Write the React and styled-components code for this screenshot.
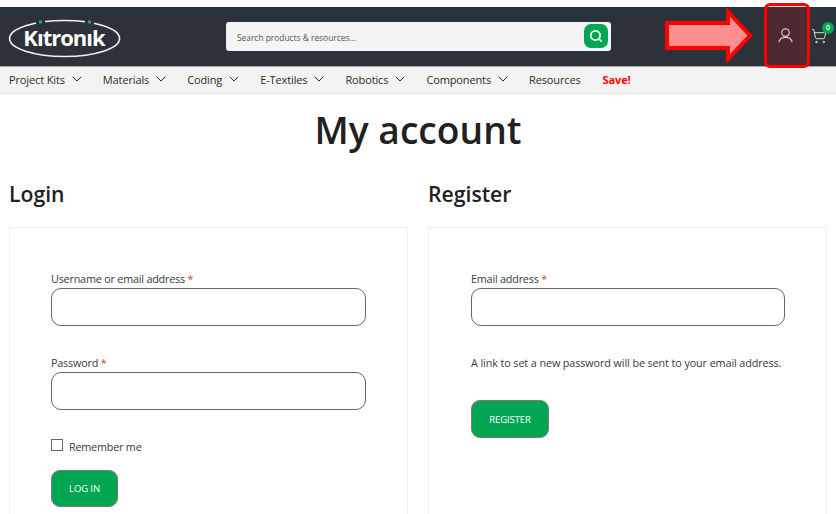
import React from "react";
import styled, { createGlobalStyle } from "styled-components";
import { ChevronDown, Search, ShoppingCart } from "lucide-react";

const GlobalStyle = createGlobalStyle`
  html, body {
    margin: 0;
    padding: 0;
    background: #fff;
    height: 514px;
    overflow: hidden;
    font-family: "Open Sans", "Liberation Sans", sans-serif;
    color: #212529;
  }
  * { box-sizing: border-box; }
`;

const Page = styled.div`
  position: relative;
  width: 836px;
  height: 514px;
  overflow: hidden;
  padding-top: 7px;
`;

const Header = styled.header`
  height: 60px;
  background: #2d3139;
  border-bottom: 1px solid #a9a9ab;
  display: flex;
  align-items: center;
  padding-left: 8px;
`;

const Logo = styled.div`
  position: relative;
  width: 114px;
  height: 42px;
  display: flex;
  align-items: center;
  justify-content: center;
  margin-top: 1px;
  flex: none;
`;

const LogoRing = styled.svg`
  position: absolute;
  inset: 0;
  width: 114px;
  height: 42px;
`;

const LogoText = styled.span`
  position: relative;
  left: -1px;
  color: #fff;
  font-weight: 700;
  font-size: 22px;
  letter-spacing: -1px;
`;

const SearchBar = styled.div`
  width: 385px;
  height: 29px;
  margin-left: 104px;
  margin-top: -1px;
  background: #f4f4f4;
  border-radius: 3px;
  display: flex;
  align-items: center;
  justify-content: space-between;
  padding: 0 3px 0 11px;
  font-size: 8.4px;
  color: #555;
  flex: none;
`;

const SearchLabel = styled.span`
  padding-top: 2px;
`;

const SearchButton = styled.span`
  width: 24px;
  height: 24px;
  background: #00a651;
  border-radius: 7px;
  display: flex;
  align-items: center;
  justify-content: center;
  color: #fff;
`;

const HeaderIcons = styled.div`
  margin-left: 167px;
  margin-top: -2px;
  display: flex;
  align-items: center;
  gap: 18px;
  color: #e8e8e8;
`;

const UserIcon = styled.svg`
  width: 15px;
  height: 15px;
  fill: none;
  stroke: currentColor;
  stroke-width: 1.2;
`;

const CartWrap = styled.span`
  position: relative;
  display: flex;
`;

const CartBadge = styled.span`
  position: absolute;
  top: -6px;
  right: -7px;
  width: 12px;
  height: 12px;
  border-radius: 50%;
  background: #00a651;
  color: #fff;
  font-size: 7px;
  font-weight: 600;
  display: flex;
  align-items: center;
  justify-content: center;
`;

const Nav = styled.nav`
  height: 27px;
  background: #f3f3f3;
  border-bottom: 1px solid #e6e6e6;
  display: flex;
  align-items: center;
  padding: 0 0 2px 9px;
  gap: 18px;
  font-size: 11px;
  letter-spacing: -0.13px;
  color: #2b2b2b;
`;

const NavItem = styled.span`
  display: flex;
  align-items: center;
  gap: 4px;
  white-space: nowrap;
  font-weight: ${(p) => (p.$sale ? 700 : 400)};
  color: ${(p) => (p.$sale ? "#f00" : "inherit")};
  margin-left: ${(p) => (p.$sale ? "4px" : "0")};
`;

const Title = styled.h1`
  margin: 0;
  height: 71px;
  font-size: 37.2px;
  font-weight: 600;
  line-height: 72px;
  text-align: center;
  color: #212121;
`;

const Columns = styled.div`
  display: grid;
  grid-template-columns: 399px 399px;
  column-gap: 20px;
  padding: 0 9px;
`;

const Heading = styled.h2`
  margin: 0 0 24px;
  height: 38px;
  line-height: 58px;
  font-size: 21.2px;
  font-weight: 600;
  color: #212121;
`;

const Card = styled.div`
  border: 1px solid #f0f0f0;
  height: 320px;
  padding: 43px 0 0 ${(p) => p.$inset}px;
`;

const Field = styled.div`
  margin-bottom: 29px;
`;

const Label = styled.label`
  display: block;
  font-size: 10.8px;
  letter-spacing: -0.2px;
  line-height: 16px;
  margin-bottom: 1px;
  color: #343a40;
`;

const Star = styled.span`
  color: #e2401c;
`;

const Input = styled.div`
  width: ${(p) => p.$w}px;
  height: 38px;
  border: 1px solid #666;
  border-radius: 10px;
  background: #fff;
`;

const Hint = styled.p`
  margin: 0 0 29px;
  font-size: 10.8px;
  letter-spacing: -0.1px;
  line-height: 16px;
  color: #343a40;
`;

const Remember = styled.div`
  display: flex;
  align-items: center;
  gap: 6px;
  font-size: 10.8px;
  letter-spacing: -0.2px;
  color: #3a3a3a;
  margin: -1px 0 16px;
  height: 16px;
`;

const Check = styled.span`
  width: 12px;
  height: 12px;
  border: 1px solid #666;
  background: #fff;
  margin-top: -2px;
`;

const Button = styled.button`
  display: block;
  width: ${(p) => p.$w}px;
  height: ${(p) => p.$h}px;
  padding: 0;
  background: #00a651;
  border: 1px solid #7b7b7b;
  border-radius: 9px;
  color: #fff;
  font-family: inherit;
  font-size: 9.5px;
  letter-spacing: -0.1px;
  text-transform: uppercase;
`;

const ArrowOverlay = styled.svg`
  position: absolute;
  left: 664px;
  top: 7px;
  width: 92px;
  height: 58px;
`;

const Highlight = styled.div`
  position: absolute;
  left: 764px;
  top: 3px;
  width: 46px;
  height: 65px;
  border: 3px solid #f00;
  border-radius: 6px;
  background: rgba(255, 0, 0, 0.16);
`;

const navItems = [
  ["Project Kits", true],
  ["Materials", true],
  ["Coding", true],
  ["E-Textiles", true],
  ["Robotics", true],
  ["Components", true],
  ["Resources", false],
];

export default function App() {
  return (
    <Page>
      <GlobalStyle />
      <Header>
        <Logo>
          <LogoRing viewBox="0 0 114 42">
            <ellipse cx="56.6" cy="22.5" rx="55" ry="18" fill="none" stroke="#f2f2f2" strokeWidth="1.6" />
            <rect x="28" y="3" width="9" height="6" fill="#2d3139" />
            <rect x="77" y="3" width="9" height="6" fill="#2d3139" />
            <rect x="31" y="4.5" width="3" height="3" fill="#00b85a" />
            <rect x="80" y="4.5" width="3" height="3" fill="#00b85a" />
          </LogoRing>
          <LogoText>Kıtronık</LogoText>
        </Logo>
        <SearchBar>
          <SearchLabel>Search products &amp; resources...</SearchLabel>
          <SearchButton>
            <Search size={14} strokeWidth={3} />
          </SearchButton>
        </SearchBar>
        <HeaderIcons>
          <UserIcon viewBox="0 0 15 15">
            <circle cx="7.5" cy="4.6" r="3.8" />
            <path d="M0.8 14.2 C1.6 10.8 4 9.4 7.5 9.4 C11 9.4 13.4 10.8 14.2 14.2" />
          </UserIcon>
          <CartWrap>
            <ShoppingCart size={16} strokeWidth={1.4} />
            <CartBadge>0</CartBadge>
          </CartWrap>
        </HeaderIcons>
      </Header>
      <Nav>
        {navItems.map(([label, hasMenu]) => (
          <NavItem key={label}>
            {label}
            {hasMenu && <ChevronDown size={16} strokeWidth={1.5} />}
          </NavItem>
        ))}
        <NavItem $sale>Save!</NavItem>
      </Nav>
      <Title>My account</Title>
      <Columns>
        <div>
          <Heading>Login</Heading>
          <Card $inset={41}>
            <Field>
              <Label>
                Username or email address <Star>*</Star>
              </Label>
              <Input $w={315} />
            </Field>
            <Field>
              <Label>
                Password <Star>*</Star>
              </Label>
              <Input $w={315} />
            </Field>
            <Remember>
              <Check />
              Remember me
            </Remember>
            <Button $w={67} $h={37}>Log in</Button>
          </Card>
        </div>
        <div>
          <Heading>Register</Heading>
          <Card $inset={42}>
            <Field>
              <Label>
                Email address <Star>*</Star>
              </Label>
              <Input $w={314} />
            </Field>
            <Hint>A link to set a new password will be sent to your email address.</Hint>
            <Button $w={78} $h={38}>Register</Button>
          </Card>
        </div>
      </Columns>
      <ArrowOverlay viewBox="0 0 92 58">
        <path
          d="M3 16 H64 V5 L86 28.5 L64 52 V41 H3 Z"
          fill="#ff8f8f"
          stroke="#f00"
          strokeWidth="4"
        />
      </ArrowOverlay>
      <Highlight />
    </Page>
  );
}
